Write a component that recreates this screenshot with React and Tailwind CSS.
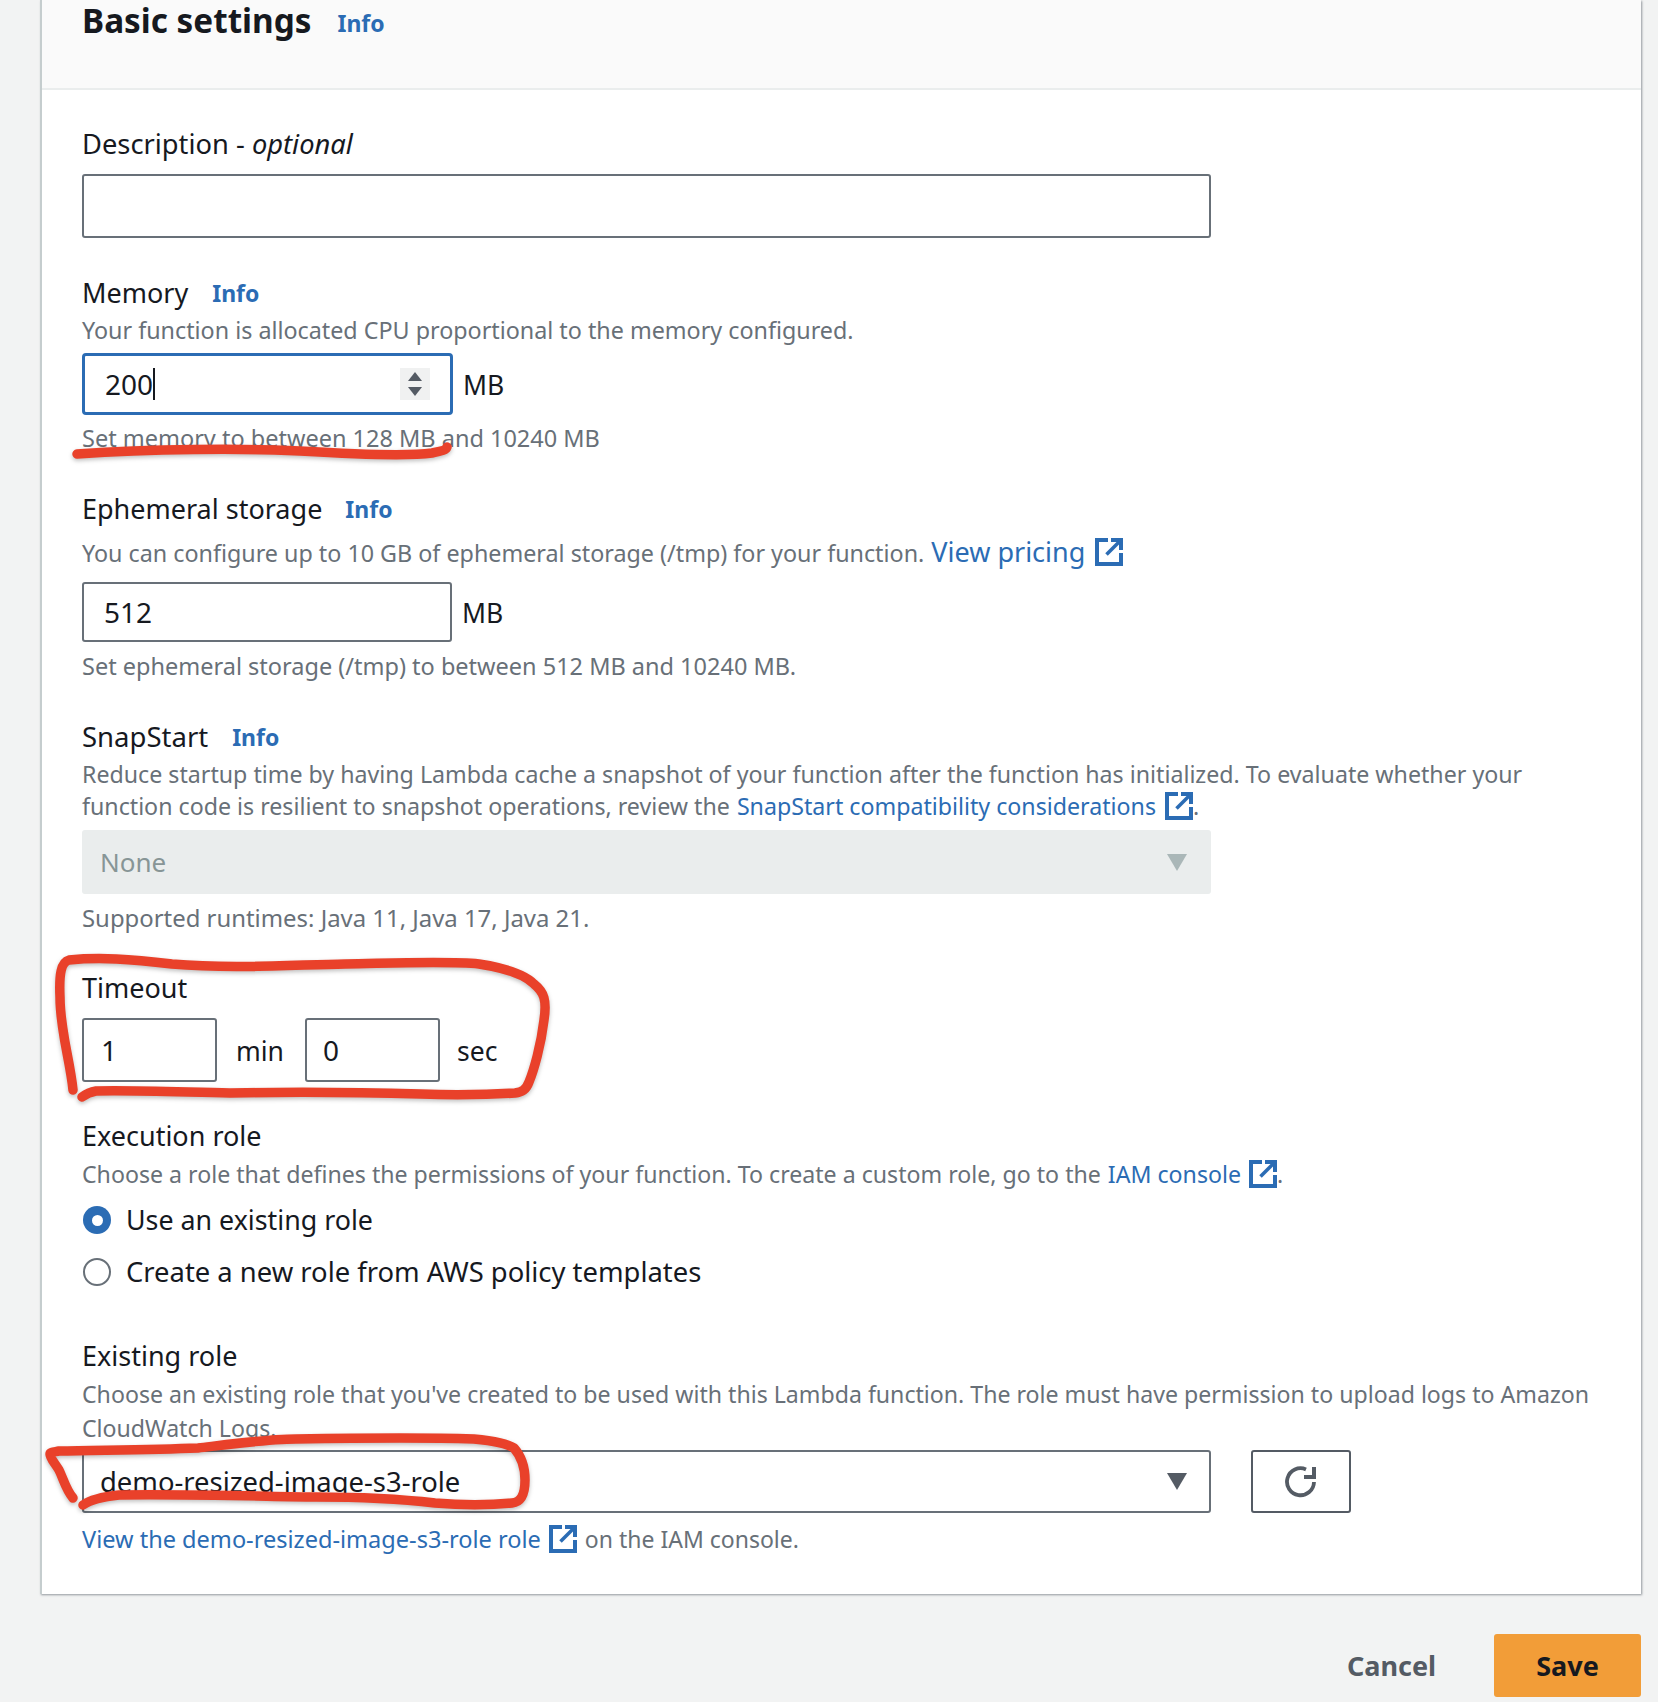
import React from 'react';

const ExternalIcon = ({ className = 'w-7 h-7' }) => (
  <svg viewBox="0 0 28 28" className={`inline-block text-[#2b6cb4] ${className}`} fill="none" stroke="currentColor" strokeWidth="4">
    <path d="M13 2H2v24h24V15" />
    <path d="M16 2h10v10" />
    <path d="M25.5 2.5 11.5 16.5" strokeWidth="3.6" />
  </svg>
);

const Caret = ({ color = '#545b64' }) => (
  <svg viewBox="0 0 20 17" className="w-5 h-[17px]" fill={color}>
    <path d="M0 0h20L10 17z" />
  </svg>
);

const Info = ({ className = '' }) => (
  <a className={`text-[23px] leading-8 font-bold text-[#2b6cb4] ${className}`}>Info</a>
);

const Label = ({ children, className = '' }) => (
  <div className={`h-8 text-[27px] leading-8 text-[#16191f] flex items-center ${className}`}>{children}</div>
);

const Hint = ({ children, className = '', size = 'text-[23.3px]' }) => (
  <div className={`h-[30px] leading-[29px] text-[#687078] whitespace-nowrap ${size} ${className}`}>{children}</div>
);

const Unit = ({ children, className = '' }) => (
  <span className={`text-[26.5px] text-[#16191f] mt-[3px] ${className}`}>{children}</span>
);

const TextBox = ({ value, className = '' }) => (
  <input
    readOnly
    value={value}
    className={`border-2 border-[#687078] rounded-[3px] bg-white text-[28px] text-[#16191f] outline-none ${className}`}
  />
);

const Radio = ({ checked, children, className = '', size = 'text-[27px]' }) => (
  <div className={`h-8 flex items-center ${className}`}>
    {checked ? (
      <span className="w-7 h-7 ml-[1px] rounded-full bg-[#2b6cb4] flex items-center justify-center">
        <span className="w-[11px] h-[11px] rounded-full bg-white" />
      </span>
    ) : (
      <span className="w-7 h-7 ml-[1px] rounded-full border-2 border-[#687078] bg-white" />
    )}
    <span className={`ml-[15px] text-[#16191f] ${size}`}>{children}</span>
  </div>
);

const Scribbles = () => (
  <svg className="absolute left-0 top-0 w-[1658px] h-[1702px] pointer-events-none drop-shadow-[0_2px_2px_rgba(0,0,0,0.25)]" viewBox="0 0 1658 1702" fill="none" stroke="#e9412a" strokeWidth="9.5" strokeLinecap="round" strokeLinejoin="round">
    <path d="M77 454C150 449 240 448 300 451C350 454 410 456 432 453C442 451 446 450 447 447" />
    <path d="M73 1090C70 1060 60 1030 60 997C59 975 61 962 69 960C100 957 130 959 172 964C230 969 290 965 345 964C400 963 450 961 479 964C505 968 525 975 534 984C544 992 547 1000 544 1020C541 1045 534 1070 529 1082C526 1090 522 1092 515 1093C480 1095 450 1095 421 1094C350 1092 280 1092 230 1093C180 1092 130 1090 96 1091C90 1092 86 1094 82 1097" />
    <path d="M73 1498C66 1490 63 1478 59 1470C54 1462 50 1458 50 1454C50 1452 54 1452 59 1451C100 1450 150 1450 198 1448C240 1443 270 1439 296 1439C350 1438 420 1437 474 1439C495 1441 508 1444 514 1448C521 1456 525 1468 525 1480C525 1495 521 1502 512 1503C490 1505 460 1505 435 1503C400 1499 360 1497 316 1497C250 1496 180 1494 119 1495C100 1497 90 1500 83 1505" />
  </svg>
);

export default function App() {
  return (
    <div className="relative w-[1658px] h-[1702px] overflow-hidden bg-[#f2f3f3] font-['Noto_Sans',sans-serif]">
      <div className="ml-[40px] w-[1601px] bg-white border-l-2 border-[#c5cdce] shadow-[1px_1px_2px_rgba(84,91,100,0.6)]">
        <div className="h-[90px] bg-[#fafafa] border-b-2 border-[#eaeded] pl-[40px] flex items-start">
          <h2 className="text-[33.3px] leading-[40px] font-bold text-[#16191f]">Basic settings</h2>
          <Info className="ml-[26px] mt-[7px]" />
        </div>

        <div className="pl-[40px] pb-[40px]">
          <Label className="mt-[38px]">
            <span className="text-[27.3px]">Description - <i>optional</i></span>
          </Label>
          <TextBox value="" className="block mt-[14px] w-[1129px] h-16" />

          <Label className="mt-[39px]">
            Memory
            <Info className="ml-[24px]" />
          </Label>
          <Hint className="mt-[7px]">Your function is allocated CPU proportional to the memory configured.</Hint>
          <div className="mt-[7px] flex items-center">
            <div className="w-[371px] h-[62px] border-[3px] border-[#2b6cb4] rounded-[4px] pl-[20px] pr-[20px] flex items-center justify-between">
              <div className="flex items-center text-[28px] text-[#16191f]">
                200
                <span className="w-[2px] h-8 bg-[#16191f]" />
              </div>
              <div className="w-[30px] h-8 bg-[#f0f1f1] flex flex-col items-center justify-center gap-[6px]">
                <svg viewBox="0 0 14 9" className="w-[14px] h-[9px]" fill="#545b64"><path d="M7 0l7 9H0z" /></svg>
                <svg viewBox="0 0 14 9" className="w-[14px] h-[9px]" fill="#545b64"><path d="M0 0h14L7 9z" /></svg>
              </div>
            </div>
            <Unit className="ml-[10px]">MB</Unit>
          </div>
          <Hint className="mt-[9px]" size="text-[23.5px]">Set memory to between 128 MB and 10240 MB</Hint>

          <Label className="mt-[38px] pt-[2px]">
            Ephemeral storage
            <Info className="ml-[23px]" />
          </Label>
          <Hint className="mt-[14px] flex items-center">
            You can configure up to 10 GB of ephemeral storage (/tmp) for your function.
            <a className="ml-[7px] -mt-[3px] text-[27px] text-[#2b6cb4]">View pricing</a>
            <ExternalIcon className="w-7 h-7 ml-[10px] -mt-[2px]" />
          </Hint>
          <div className="mt-[14px] flex items-center">
            <TextBox value="512" className="w-[370px] h-[60px] pl-[20px]" />
            <Unit className="ml-[10px]">MB</Unit>
          </div>
          <Hint className="mt-[10px]" size="text-[23.5px]">Set ephemeral storage (/tmp) to between 512 MB and 10240 MB.</Hint>

          <Label className="mt-[38px] pt-[2px]">
            <span className="text-[27.5px]">SnapStart</span>
            <Info className="ml-[24px]" />
          </Label>
          <div className="mt-[6px] text-[23.2px] leading-8 text-[#687078] whitespace-nowrap">
            <div>Reduce startup time by having Lambda cache a snapshot of your function after the function has initialized. To evaluate whether your</div>
            <div className="flex items-center">
              function code is resilient to snapshot operations, review the
              <a className="ml-[7px] text-[#2b6cb4]">SnapStart compatibility considerations</a>
              <ExternalIcon className="w-7 h-7 ml-[9px]" />
              .
            </div>
          </div>
          <div className="mt-[8px] w-[1129px] h-16 bg-[#eaeded] rounded-[3px] pl-[18px] pr-[24px] flex items-center justify-between">
            <span className="text-[26px] text-[#879596]">None</span>
            <Caret color="#aab7b8" />
          </div>
          <Hint className="mt-[9px]" size="text-[23.9px]">Supported runtimes: Java 11, Java 17, Java 21.</Hint>

          <Label className="mt-[38px] pt-[2px]">Timeout</Label>
          <div className="mt-[15px] flex items-center">
            <TextBox value="1" className="w-[135px] h-16 pl-[17px]" />
            <Unit className="ml-[19px] w-[69px]">min</Unit>
            <TextBox value="0" className="w-[135px] h-16 pl-[16px]" />
            <Unit className="ml-[17px]">sec</Unit>
          </div>

          <Label className="mt-[37px] pt-[2px]">Execution role</Label>
          <Hint className="mt-[8px] flex items-center" size="text-[23.15px]">
            Choose a role that defines the permissions of your function. To create a custom role, go to the
            <a className="ml-[7px] text-[#2b6cb4]">IAM console</a>
            <ExternalIcon className="w-7 h-7 ml-[8px]" />
            .
          </Hint>
          <Radio checked className="mt-[15px]" size="text-[26.8px]">Use an existing role</Radio>
          <Radio className="mt-[20px]" size="text-[27.4px]">Create a new role from AWS policy templates</Radio>

          <Label className="mt-[51px] pt-[2px]">Existing role</Label>
          <div className="mt-[6px] text-[23.13px] leading-[34px] text-[#687078] whitespace-nowrap">
            <div>Choose an existing role that you've created to be used with this Lambda function. The role must have permission to upload logs to Amazon</div>
            <div>CloudWatch Logs.</div>
          </div>
          <div className="mt-[5px] flex items-center">
            <div className="w-[1129px] h-[63px] border-2 border-[#687078] rounded-[3px] pl-[16px] pr-[22px] flex items-center justify-between">
              <span className="text-[27.4px] text-[#16191f]">demo-resized-image-s3-role</span>
              <Caret />
            </div>
            <button className="ml-[40px] w-[100px] h-[63px] border-2 border-[#545b64] rounded-[3px] flex items-center justify-center">
              <svg viewBox="0 0 34 34" className="w-[34px] h-[34px]" fill="none" stroke="#545b64" strokeWidth="3.8">
                <path d="M30 17A13.5 13.5 0 1 1 22 4.4" />
                <path d="M30 2v10H20" strokeWidth="4" />
              </svg>
            </button>
          </div>
          <Hint className="mt-[11px] flex items-center" size="text-[23.55px]">
            <a className="text-[#2b6cb4]">View the demo-resized-image-s3-role role</a>
            <ExternalIcon className="w-7 h-7 ml-[8px]" />
            <span className="ml-[8px] text-[23px]">on the IAM console.</span>
          </Hint>
        </div>
      </div>

      <div className="mt-[40px] ml-[1347px] w-[294px] flex items-center justify-between">
        <button className="pt-[2px] text-[27px] font-bold text-[#545b64]">Cancel</button>
        <button className="pt-[2px] w-[147px] h-[63px] bg-[#f29d38] rounded-[3px] text-[27px] font-bold text-[#16191f]">Save</button>
      </div>

      <Scribbles />
    </div>
  );
}
